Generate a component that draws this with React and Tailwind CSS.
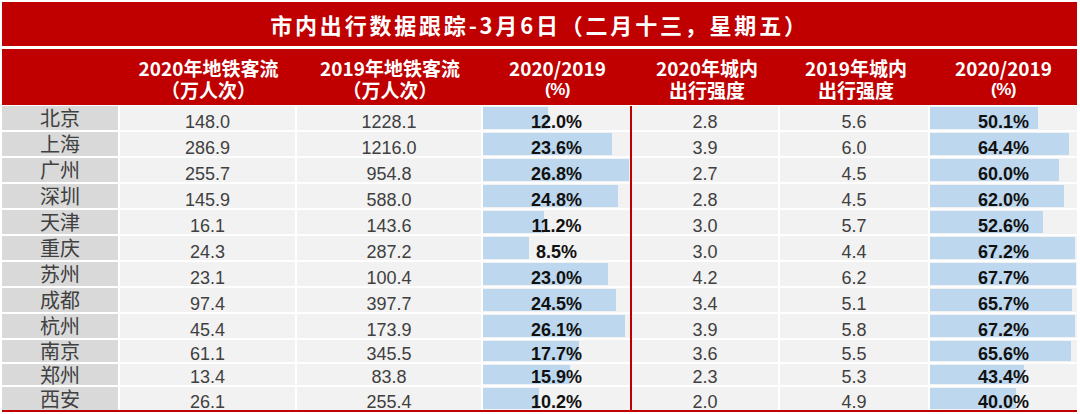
import React from "react";

const rows = [
  ["北京", "148.0", "1228.1", 12.0, "2.8", "5.6", 50.1],
  ["上海", "286.9", "1216.0", 23.6, "3.9", "6.0", 64.4],
  ["广州", "255.7", "954.8", 26.8, "2.7", "4.5", 60.0],
  ["深圳", "145.9", "588.0", 24.8, "2.8", "4.5", 62.0],
  ["天津", "16.1", "143.6", 11.2, "3.0", "5.7", 52.6],
  ["重庆", "24.3", "287.2", 8.5, "3.0", "4.4", 67.2],
  ["苏州", "23.1", "100.4", 23.0, "4.2", "6.2", 67.7],
  ["成都", "97.4", "397.7", 24.5, "3.4", "5.1", 65.7],
  ["杭州", "45.4", "173.9", 26.1, "3.9", "5.8", 67.2],
  ["南京", "61.1", "345.5", 17.7, "3.6", "5.5", 65.6],
  ["郑州", "13.4", "83.8", 15.9, "2.3", "5.3", 43.4],
  ["西安", "26.1", "255.4", 10.2, "2.0", "4.9", 40.0],
];

// row heights are not quite even in the source table
const heights = [
  "h-[24px]", "h-[24px]", "h-[24px]", "h-[24px]", "h-[24px]", "h-[24px]",
  "h-[24px]", "h-[24px]", "h-[24px]", "h-[22px]", "h-[21px]", "h-[23px]",
];

const cjk = "font-['Noto_Sans_CJK_SC',sans-serif]";
const num = "font-['Liberation_Sans','Noto_Sans_CJK_SC',sans-serif]";

const NumCell = ({ w, children }) => (
  <div className={`${w} h-full bg-[#f2f2f2] flex items-end justify-center pb-[1px] ${num} text-[18px] leading-[14px] text-[#404040]`}>
    {children}
  </div>
);

const BarCell = ({ w, value, max }) => (
  <div className={`${w} h-full bg-[#f2f2f2] relative`}>
    <div
      className="absolute left-0 top-[1px] bottom-[1px] bg-[#bdd7ee]"
      style={{ width: `${(value / max) * 146}px` }}
    />
    <div className={`relative h-full flex items-end justify-center pb-[1px] ${num} font-bold text-[18px] leading-[14px] text-[#111]`}>
      {value.toFixed(1)}%
    </div>
  </div>
);

const HeadCell = ({ w, top, bottom, small }) => (
  <div className={`${w} flex flex-col items-center justify-center gap-[2px] pt-[4px] text-white font-bold`}>
    <div className={`${cjk} text-[19px] leading-[20px]`}>{top}</div>
    {small ? (
      <div className={`${num} text-[17px] leading-[20px] tracking-[-0.5px]`}>{bottom}</div>
    ) : (
      <div className={`${cjk} text-[19px] leading-[20px]`}>{bottom}</div>
    )}
  </div>
);

export default function App() {
  return (
    <div className="w-[1080px] h-[414px] bg-white overflow-hidden">
      <div className="ml-[2px] w-[1075px] pt-[2px]">
        <div className={`h-[44px] bg-[#c00000] flex items-center justify-center text-white font-bold ${cjk} text-[22px] tracking-[2.8px]`}>
          市内出行数据跟踪-3月6日（二月十三，星期五）
        </div>

        <div className="mt-[3px] h-[56px] bg-[#c00000] flex">
          <div className="w-[118px]" />
          <HeadCell w="w-[177px]" top="2020年地铁客流" bottom="（万人次）" />
          <HeadCell w="w-[186px]" top="2019年地铁客流" bottom="（万人次）" />
          <HeadCell w="w-[149px]" top="2020/2019" bottom="(%)" small />
          <HeadCell w="w-[150px]" top="2020年城内" bottom="出行强度" />
          <HeadCell w="w-[148px]" top="2019年城内" bottom="出行强度" />
          <HeadCell w="w-[147px]" top="2020/2019" bottom="(%)" small />
        </div>

        <div className="mt-[1px] flex">
          <div className="flex flex-col gap-[2px]">
            {rows.map((r, i) => (
              <div key={r[0]} className={`${heights[i]} flex gap-[2px]`}>
                <div className={`w-[116px] h-full bg-[#d9d9d9] flex items-center justify-center ${cjk} text-[20px] leading-none text-[#404040]`}>
                  {r[0]}
                </div>
                <NumCell w="w-[175px]">{r[1]}</NumCell>
                <NumCell w="w-[184px]">{r[2]}</NumCell>
                <BarCell w="w-[147px]" value={r[3]} max={26.8} />
              </div>
            ))}
          </div>

          <div className="w-[2px] self-stretch bg-[#c00000]" />

          <div className="flex flex-col gap-[2px]">
            {rows.map((r, i) => (
              <div key={r[0]} className={`${heights[i]} flex gap-[2px]`}>
                <NumCell w="w-[146px]">{r[4]}</NumCell>
                <NumCell w="w-[148px]">{r[5]}</NumCell>
                <BarCell w="w-[147px]" value={r[6]} max={67.7} />
              </div>
            ))}
          </div>
        </div>

        <div className="h-[2px] bg-[#c00000]" />
      </div>
    </div>
  );
}
